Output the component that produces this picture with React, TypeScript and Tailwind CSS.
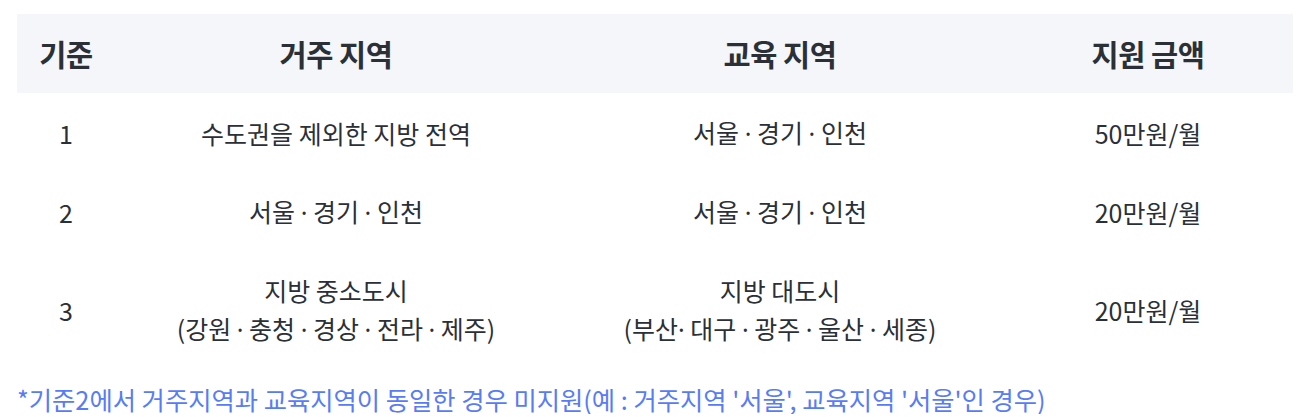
const rows = [
  { id: "1", home: ["수도권을 제외한 지방 전역"], school: ["서울 · 경기 · 인천"], amount: "50만원/월" },
  { id: "2", home: ["서울 · 경기 · 인천"], school: ["서울 · 경기 · 인천"], amount: "20만원/월" },
  {
    id: "3",
    home: ["지방 중소도시", "(강원 · 충청 · 경상 · 전라 · 제주)"],
    school: ["지방 대도시", "(부산· 대구 · 광주 · 울산 · 세종)"],
    amount: "20만원/월",
  },
];

const font = { fontFamily: '"Noto Sans CJK KR", "Noto Sans", sans-serif' };
const dotFont = { fontFamily: '"Noto Sans", "Liberation Sans", sans-serif' };

// CJK font draws the middle dot full width; use a latin one for it
function Line({ text }: { text: string }) {
  const parts = text.split("·");
  return (
    <div>
      {parts.map((p, i) => (
        <span key={i}>
          {i > 0 && <span style={dotFont}>·</span>}
          {p}
        </span>
      ))}
    </div>
  );
}

export default function App() {
  return (
    <div className="bg-white w-[1302px] px-[17px] pt-[14px]" style={font}>
      <div className="grid grid-cols-[98px_442px_446px_290px] text-[#2b3037]">
        <div className="col-span-4 grid grid-cols-subgrid bg-[#f5f6f9] h-[79px] items-center text-center text-[29.5px] font-bold tracking-[-0.5px]">
          <div>기준</div>
          <div>거주 지역</div>
          <div>교육 지역</div>
          <div>지원 금액</div>
        </div>
        {rows.map((r) => (
          <div
            key={r.id}
            className="col-span-4 grid grid-cols-subgrid items-center text-center text-[25px] leading-[38px] py-[20px]"
          >
            <div>{r.id}</div>
            <div>
              {r.home.map((t) => (
                <Line key={t} text={t} />
              ))}
            </div>
            <div>
              {r.school.map((t) => (
                <Line key={t} text={t} />
              ))}
            </div>
            <div>{r.amount}</div>
          </div>
        ))}
      </div>
      <p className="mt-[16px] text-[25.3px] leading-[30px] text-[#587bf6] whitespace-nowrap">
        *기준2에서 거주지역과 교육지역이 동일한 경우 미지원(예 : 거주지역 '서울', 교육지역 '서울'인 경우)
      </p>
    </div>
  );
}
